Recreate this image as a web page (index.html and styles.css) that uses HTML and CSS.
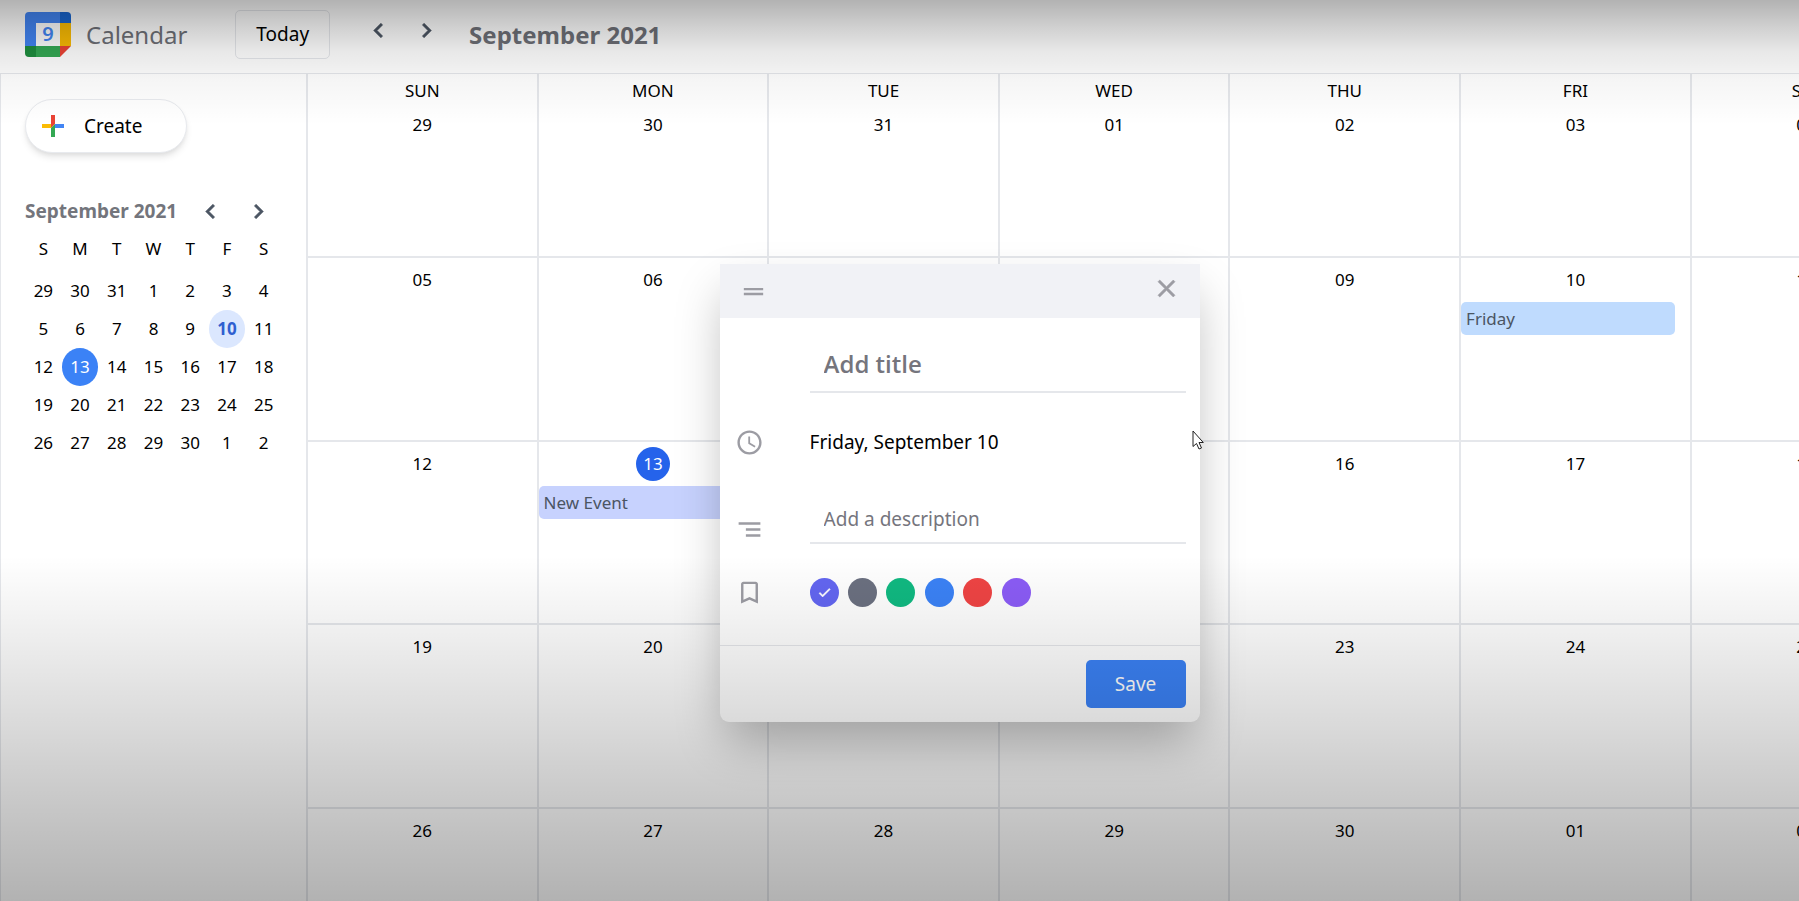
FILE: index.html
```html
<!DOCTYPE html>
<html lang="en">
<head>
<meta charset="utf-8">
<title>Calendar</title>
<link rel="stylesheet" href="styles.css">
</head>
<body>
<div class="app">
  <header class="topbar">
    <svg class="logo" viewBox="0 0 46 45" aria-hidden="true">
      <path fill="#1e8e3e" d="M0 34h11v11H4a4 4 0 0 1-4-4z"/>
      <path fill="#34a853" d="M11 34h24v11H11z"/>
      <path fill="#4285f4" d="M4 0h31v11H11v23H0V4a4 4 0 0 1 4-4z"/>
      <path fill="#1967d2" d="M35 0h7a4 4 0 0 1 4 4v7H35z"/>
      <path fill="#fbbc04" d="M35 11h11v23H35z"/>
      <path fill="#ea4335" d="M35 34h11L35 45z"/>
      <path fill="#fff" d="M11 11h24v23H11z"/>
      <text class="logo-day" x="23" y="29" text-anchor="middle">9</text>
    </svg>
    <h1 class="brand">Calendar</h1>
    <button class="today" type="button">Today</button>
    <div class="pager">
      <button class="icon-btn" type="button" aria-label="Previous month"><svg class="icon icon-heavy" viewBox="0 0 24 24"><path d="M15.41 7.41 14 6l-6 6 6 6 1.41-1.41L10.83 12z"/></svg></button>
      <button class="icon-btn" type="button" aria-label="Next month"><svg class="icon icon-heavy" viewBox="0 0 24 24"><path d="M10 6 8.59 7.41 13.17 12l-4.58 4.59L10 18l6-6z"/></svg></button>
    </div>
    <h2 class="month-title">September 2021</h2>
  </header>

  <div class="main">
    <aside class="sidebar">
      <button class="create" type="button">
        <svg class="plus" viewBox="0 0 22 22" aria-hidden="true"><path fill="#ea4335" d="M9 0h4v9l-4 4z"/><path fill="#fbbc04" d="M0 9h9v4H0z"/><path fill="#34a853" d="M9 13l4-4v13H9z"/><path fill="#4285f4" d="M13 9h9v4h-9z"/></svg>
        Create
      </button>
      <div class="mini-head">
        <p class="mini-title">September 2021</p>
        <button class="icon-btn" type="button" aria-label="Previous"><svg class="icon icon-heavy" viewBox="0 0 24 24"><path d="M15.41 7.41 14 6l-6 6 6 6 1.41-1.41L10.83 12z"/></svg></button>
        <button class="icon-btn" type="button" aria-label="Next"><svg class="icon icon-heavy" viewBox="0 0 24 24"><path d="M10 6 8.59 7.41 13.17 12l-4.58 4.59L10 18l6-6z"/></svg></button>
      </div>
      <div class="mini-grid mini-week">
        <span>S</span><span>M</span><span>T</span><span>W</span><span>T</span><span>F</span><span>S</span>
      </div>
      <div class="mini-grid">
        <button type="button">29</button><button type="button">30</button><button type="button">31</button><button type="button">1</button><button type="button">2</button><button type="button">3</button><button type="button">4</button>
        <button type="button">5</button><button type="button">6</button><button type="button">7</button><button type="button">8</button><button type="button">9</button><button type="button" class="picked">10</button><button type="button">11</button>
        <button type="button">12</button><button type="button" class="current">13</button><button type="button">14</button><button type="button">15</button><button type="button">16</button><button type="button">17</button><button type="button">18</button>
        <button type="button">19</button><button type="button">20</button><button type="button">21</button><button type="button">22</button><button type="button">23</button><button type="button">24</button><button type="button">25</button>
        <button type="button">26</button><button type="button">27</button><button type="button">28</button><button type="button">29</button><button type="button">30</button><button type="button">1</button><button type="button">2</button>
      </div>
    </aside>

    <main class="month-wrap">
      <div class="month">
        <div class="day"><p class="weekday">SUN</p><p class="date">29</p></div>
        <div class="day"><p class="weekday">MON</p><p class="date">30</p></div>
        <div class="day"><p class="weekday">TUE</p><p class="date">31</p></div>
        <div class="day"><p class="weekday">WED</p><p class="date">01</p></div>
        <div class="day"><p class="weekday">THU</p><p class="date">02</p></div>
        <div class="day"><p class="weekday">FRI</p><p class="date">03</p></div>
        <div class="day"><p class="weekday">SAT</p><p class="date">04</p></div>
        <div class="day"><p class="date">05</p></div>
        <div class="day"><p class="date">06</p></div>
        <div class="day"><p class="date">07</p></div>
        <div class="day"><p class="date">08</p></div>
        <div class="day"><p class="date">09</p></div>
        <div class="day"><p class="date">10</p><div class="event event-blue">Friday</div></div>
        <div class="day"><p class="date">11</p></div>
        <div class="day"><p class="date">12</p></div>
        <div class="day"><p class="date date-today">13</p><div class="event event-indigo">New Event</div></div>
        <div class="day"><p class="date">14</p></div>
        <div class="day"><p class="date">15</p></div>
        <div class="day"><p class="date">16</p></div>
        <div class="day"><p class="date">17</p></div>
        <div class="day"><p class="date">18</p></div>
        <div class="day"><p class="date">19</p></div>
        <div class="day"><p class="date">20</p></div>
        <div class="day"><p class="date">21</p></div>
        <div class="day"><p class="date">22</p></div>
        <div class="day"><p class="date">23</p></div>
        <div class="day"><p class="date">24</p></div>
        <div class="day"><p class="date">25</p></div>
        <div class="day"><p class="date">26</p></div>
        <div class="day"><p class="date">27</p></div>
        <div class="day"><p class="date">28</p></div>
        <div class="day"><p class="date">29</p></div>
        <div class="day"><p class="date">30</p></div>
        <div class="day"><p class="date">01</p></div>
        <div class="day"><p class="date">02</p></div>
      </div>
    </main>
  </div>

  <form class="modal">
    <div class="modal-head">
      <svg class="icon icon-muted" viewBox="0 0 24 24" aria-hidden="true"><path d="M20 9H4v2h16V9zM4 15h16v-2H4v2z"/></svg>
      <button class="icon-btn close" type="button" aria-label="Close"><svg class="icon icon-muted icon-close" viewBox="0 0 24 24"><path d="M19 6.41 17.59 5 12 10.59 6.41 5 5 6.41 10.59 12 5 17.59 6.41 19 12 13.41 17.59 19 19 17.59 13.41 12z"/></svg></button>
    </div>
    <div class="modal-body">
      <span></span>
      <input class="field field-title" type="text" placeholder="Add title" aria-label="Title">
      <svg class="icon icon-muted" viewBox="0 0 24 24" aria-hidden="true"><path d="M11.99 2C6.47 2 2 6.48 2 12s4.47 10 9.99 10C17.52 22 22 17.52 22 12S17.52 2 11.99 2zM12 20c-4.42 0-8-3.58-8-8s3.58-8 8-8 8 3.58 8 8-3.58 8-8 8zm.5-13H11v6l5.25 3.15.75-1.23-4.5-2.67z"/></svg>
      <p class="when">Friday, September 10</p>
      <svg class="icon icon-muted" viewBox="0 0 24 24" aria-hidden="true"><path d="M9 18h12v-2H9v2zM3 6v2h18V6H3zm6 7h12v-2H9v2z"/></svg>
      <input class="field field-desc" type="text" placeholder="Add a description" aria-label="Description">
      <svg class="icon icon-muted" viewBox="0 0 24 24" aria-hidden="true"><path d="M17 3H7c-1.1 0-1.99.9-1.99 2L5 21l7-3 7 3V5c0-1.1-.9-2-2-2zm0 15-5-2.18L7 18V5h10v13z"/></svg>
      <div class="swatches">
        <label class="swatch-wrap"><input class="swatch indigo" type="radio" name="label" aria-label="Indigo" checked><svg class="tick" viewBox="0 0 24 24"><path d="M9 16.17 4.83 12l-1.42 1.41L9 19 21 7l-1.41-1.41z"/></svg></label>
        <input class="swatch gray" type="radio" name="label" aria-label="Gray">
        <input class="swatch green" type="radio" name="label" aria-label="Green">
        <input class="swatch blue" type="radio" name="label" aria-label="Blue">
        <input class="swatch red" type="radio" name="label" aria-label="Red">
        <input class="swatch purple" type="radio" name="label" aria-label="Purple">
      </div>
    </div>
    <div class="modal-foot"><button class="save" type="button">Save</button></div>
  </form>
  <div class="shade"></div>
  <svg class="cursor" viewBox="0 0 12 20" aria-hidden="true"><path fill="#fff" stroke="#222" stroke-width="1" d="M1 1v15.500l3.500-3 2.500 5.500 2.500-1-2.500-5.500h4.300z"/></svg>
</div>
</body>
</html>
```
FILE: styles.css
```css
* { box-sizing: border-box; }
body {
  margin: 0;
  font-family: "Noto Sans", "Open Sans", sans-serif;
  font-size: 19px;
  line-height: 29px;
  color: #000;
  background: #fff;
}
h1, h2, p { margin: 0; }
button, input { font: inherit; color: inherit; margin: 0; }
button { background: none; border: 0; padding: 0; cursor: pointer; }

.app {
  position: relative;
  height: 100vh;
  overflow: hidden;
  display: flex;
  flex-direction: column;
}
.icon { display: block; width: 29px; height: 29px; fill: #4b5563; flex: none; }
.icon-muted { fill: #9c9ca3; }
.icon-heavy { stroke: #4b5563; stroke-width: .5; }
.icon-close { stroke: #9c9ca3; stroke-width: .5; }
.icon-btn { display: block; flex: none; }

.topbar {
  flex: none;
  height: 73px;
  padding: 0 25px;
  display: flex;
  align-items: center;
  padding-bottom: 4px;
}
.logo { width: 46px; height: 45px; }
.logo-day { font-size: 20px; font-weight: 600; fill: #4285f4; }
.brand { margin-left: 15px; font-size: 24px; font-weight: 400; line-height: 34px; color: #6e7077; }
.today {
  margin-left: 48px;
  padding: 9px 20px;
  border: 1px solid #e5e7eb;
  border-radius: 5px;
}
.pager { display: flex; gap: 19px; margin: 0 28px 9px 34px; }
.month-title { font-size: 24px; font-weight: 700; line-height: 34px; color: #6e7077; }

.main { flex: 1; min-height: 0; display: flex; }
.sidebar {
  flex: none;
  width: 307px;
  padding: 25px 24px;
  border: 1px solid #e5e7eb;
  border-bottom: 0;
}
.create {
  display: flex;
  align-items: center;
  gap: 20px;
  height: 54px;
  padding: 0 44px 0 16px;
  border: 1px solid #e8eaee;
  border-radius: 27px;
  background: #fff;
  box-shadow: 0 5px 7px -1px rgba(0, 0, 0, .1), 0 2px 4px -1px rgba(0, 0, 0, .06);
}
.plus { width: 22px; height: 22px; }
.mini-head { display: flex; align-items: center; gap: 19px; margin-top: 44px; }
.mini-title { font-weight: 700; color: #73757c; }
.mini-grid { display: grid; grid-template-columns: repeat(7, 1fr); font-size: 17px; }
.mini-grid > * { height: 38px; line-height: 38px; text-align: center; padding: 0; }
.mini-week { margin: 4px 0; }
.picked { border-radius: 50%; background: #dbe7fe; color: #2f5fd0; font-weight: 700; }
.current { border-radius: 50%; background: #3b82f6; color: #fff; }

.month-wrap { flex: 1; min-width: 0; overflow: hidden; }
.month {
  width: 108.2%;
  height: 111%;
  display: grid;
  grid-template: repeat(5, 1fr) / repeat(7, 1fr);
  font-size: 17px;
}
.day {
  min-width: 0;
  border: 1px solid #e5e7eb;
  padding-top: 5px;
  display: flex;
  flex-direction: column;
  align-items: center;
}
.weekday { line-height: 24px; margin-bottom: 5px; }
.date { width: 34px; height: 34px; line-height: 34px; text-align: center; margin-bottom: 5px; }
.date-today { border-radius: 50%; background: #2563eb; color: #fff; }
.event {
  align-self: stretch;
  margin-right: 15px;
  padding: 0 5px;
  height: 33px;
  line-height: 33px;
  border-radius: 5px;
  color: #4b5563;
}
.event-blue { background: #bfdbfe; }
.event-indigo { background: #c7d2fe; }

.modal {
  position: absolute;
  left: 40%;
  top: 264px;
  width: 480px;
  border-radius: 0 0 9px 9px;
  background: #fff;
  box-shadow: 0 24px 50px -6px rgba(0, 0, 0, .28);
}
.modal-head {
  height: 54px;
  padding: 0 19px;
  display: flex;
  align-items: center;
  justify-content: space-between;
  background: #f1f2f6;
}
.close { margin-bottom: 5px; }
.modal-body {
  display: grid;
  grid-template-columns: 75px 1fr;
  align-items: end;
  row-gap: 34px;
  padding: 15px 14px 38px 15px;
}
.when { line-height: 30px; }
.field {
  width: 100%;
  border: 0;
  border-bottom: 2px solid #e5e7eb;
  border-radius: 0;
  background: none;
  outline: 0;
}
.field::placeholder { color: #75757d; opacity: 1; }
.field-title { height: 60px; padding: 15px 14px 13px; font-family: "Open Sans", "Noto Sans", sans-serif; font-size: 24px; font-weight: 600; line-height: 30px; }
.field-desc { height: 53px; padding: 16px 14px 11px; line-height: 24px; }
.swatches { display: flex; justify-content: space-between; width: 221px; }
.swatch { appearance: none; display: block; width: 29px; height: 29px; border-radius: 50%; }
.swatch-wrap { position: relative; }
.tick { position: absolute; left: 7px; top: 7px; width: 15px; height: 15px; fill: #fff; stroke: #fff; }
.indigo { background: #6366f1; }
.gray { background: #6b7080; }
.green { background: #10b981; }
.blue { background: #3b82f6; }
.red { background: #ef4444; }
.purple { background: #8b5cf6; }
.modal-foot {
  display: flex;
  justify-content: flex-end;
  padding: 14px;
  border-top: 1px solid #e5e7eb;
}
.save { width: 100px; height: 48px; border-radius: 5px; background: #3b82f6; color: #fff; }

/* Dark fades over the top and bottom edges of the window. */
.shade {
  position: absolute;
  inset: 0;
  pointer-events: none;
  background:
    linear-gradient(to bottom, rgba(0, 0, 0, .3), rgba(0, 0, 0, .18) 28px, rgba(0, 0, 0, .09) 52px, rgba(0, 0, 0, .04) 80px, rgba(0, 0, 0, 0) 125px),
    linear-gradient(to top, rgba(0, 0, 0, .3), rgba(0, 0, 0, .22) 95px, rgba(0, 0, 0, .13) 195px, rgba(0, 0, 0, .06) 275px, rgba(0, 0, 0, 0) 345px);
}
.cursor { position: absolute; left: 1192px; top: 430px; width: 12px; height: 20px; }
```
